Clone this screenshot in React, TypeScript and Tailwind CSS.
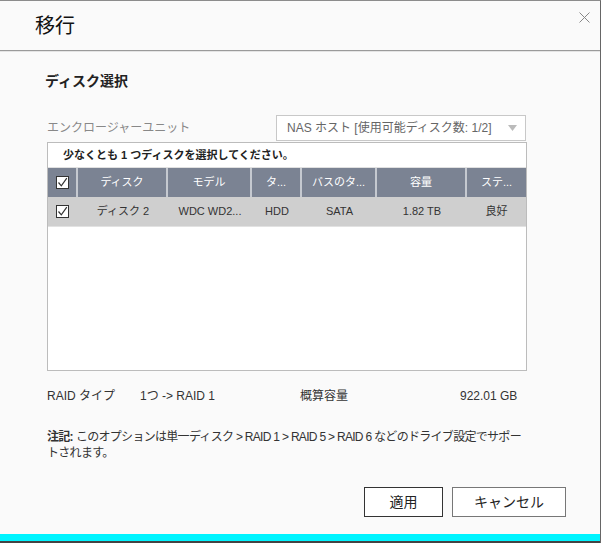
import React from "react";

const font = { fontFamily: '"Liberation Sans", "Noto Sans CJK JP", sans-serif' };

function Check() {
  return (
    <div className="w-[13px] h-[13px] border border-[#333] bg-white flex items-center justify-center">
      <svg width="11" height="11" viewBox="0 0 11 11">
        <path d="M1.5 5.5 L4.3 8.8 L9.8 1.2" fill="none" stroke="#333" strokeWidth="1.2" />
      </svg>
    </div>
  );
}

const cols = [
  { w: "w-[90px]", h: "ディスク", v: "ディスク 2" },
  { w: "w-[84px]", h: "モデル", v: "WDC WD2..." },
  { w: "w-[50px]", h: "タ...", v: "HDD" },
  { w: "w-[75px]", h: "バスのタ...", v: "SATA" },
  { w: "w-[90px]", h: "容量", v: "1.82 TB" },
  { w: "flex-1", h: "ステ...", v: "良好" },
];

export default function App() {
  return (
    <div
      style={font}
      className="w-[601px] h-[543px] bg-[#fafafa] border-t border-[#8c8c8c] border-r border-r-[#666] flex flex-col text-[#333]"
    >
      <div className="h-[50px] border-b border-[#9a9a9a] flex items-center pl-[35px] relative shrink-0">
        <span className="text-[20px] text-[#111]">移行</span>
        <svg className="absolute right-[10px] top-[11px]" width="11" height="11" viewBox="0 0 11 11">
          <path d="M0.5 0.5 L10.5 10.5 M10.5 0.5 L0.5 10.5" stroke="#888" strokeWidth="1" />
        </svg>
      </div>
      <div className="h-px bg-[#e4e4e4] shrink-0" />
      <div className="flex-1 flex flex-col pl-[47px] pr-[74px]">
        <div className="mt-[20px] -ml-[2px] text-[14px] font-bold text-[#222] leading-[18px]">ディスク選択</div>
        <div className="mt-[25px] flex items-center h-[26px]">
          <span className="text-[12px] text-[#888] w-[229px]">エンクロージャーユニット</span>
          <div className="w-[250px] h-[26px] border border-[#c8c8c8] bg-white flex items-center pl-[10px] pr-[8px] text-[12px] text-[#666]">
            <span className="flex-1">NAS ホスト [使用可能ディスク数: 1/2]</span>
            <svg width="9" height="6" viewBox="0 0 9 6">
              <path d="M0 0 L9 0 L4.5 6 Z" fill="#bbb" />
            </svg>
          </div>
        </div>
        <div className="mt-px w-[480px] h-[229px] border border-[#bcbcbc] bg-white flex flex-col">
          <div className="h-[25px] flex items-center pl-[15px] text-[11px] font-bold text-[#222] border-b border-[#e0e0e0]">
            少なくとも 1 つディスクを選択してください。
          </div>
          <div className="h-[29px] bg-[#7b8393] flex text-white text-[11px]">
            <div className="w-[30px] flex items-center justify-center border-r-2 border-[#c5c9d0]">
              <Check />
            </div>
            {cols.map((c, i) => (
              <div
                key={c.h}
                className={`${c.w} flex items-center justify-center ${i < cols.length - 1 ? "border-r-2 border-[#c5c9d0]" : ""}`}
              >
                {c.h}
              </div>
            ))}
          </div>
          <div className="h-[30px] bg-[#cfcfcf] flex text-[#333] text-[11px] border-b border-[#e2e2e2]">
            <div className="w-[30px] flex items-center justify-center pr-[2px]">
              <Check />
            </div>
            {cols.map((c) => (
              <div key={c.h} className={`${c.w} flex items-center justify-center`}>
                {c.v}
              </div>
            ))}
          </div>
        </div>
        <div className="mt-[17px] flex items-center text-[12px] text-[#333] h-[16px]">
          <span className="w-[93px]">RAID タイプ</span>
          <span className="w-[160px]">1つ -&gt; RAID 1</span>
          <span className="w-[160px]">概算容量</span>
          <span>922.01 GB</span>
        </div>
        <div className="mt-[25px] text-[12px] leading-[16px] text-[#333] whitespace-nowrap tracking-[-0.7px]">
          <div>
            <span className="font-bold mr-[3px]">注記:</span>このオプションは単一ディスク &gt; RAID 1 &gt; RAID 5 &gt; RAID 6 などのドライブ設定でサポー
          </div>
          <div>トされます。</div>
        </div>
        <div className="mt-[26px] flex justify-end gap-[9px] -mr-[40px]">
          <button className="w-[79px] h-[30px] border border-[#333] bg-white text-[14px] text-[#222]">適用</button>
          <button className="w-[114px] h-[30px] border border-[#777] bg-white text-[14px] text-[#222]">キャンセル</button>
        </div>
      </div>
      <div className="h-[7px] bg-[#00f4ff] shrink-0" />
      <div className="h-[2px] bg-[#444] shrink-0" />
    </div>
  );
}
